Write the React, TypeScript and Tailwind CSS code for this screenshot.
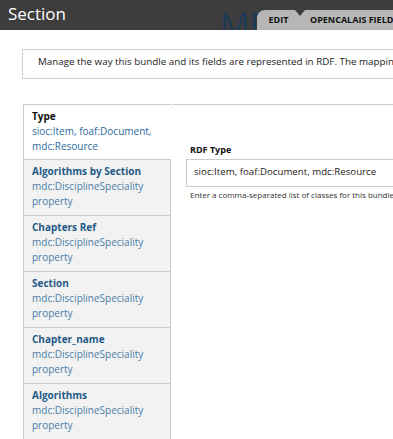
import React from 'react';

const font = { fontFamily: '"Open Sans", "Noto Sans", Arial, sans-serif' };

const tabs = [
  { title: 'Type', sub: ['sioc:Item, foaf:Document,', 'mdc:Resource'], selected: true },
  { title: 'Algorithms by Section', sub: ['mdc:DisciplineSpeciality', 'property'] },
  { title: 'Chapters Ref', sub: ['mdc:DisciplineSpeciality', 'property'] },
  { title: 'Section', sub: ['mdc:DisciplineSpeciality', 'property'] },
  { title: 'Chapter_name', sub: ['mdc:DisciplineSpeciality', 'property'] },
  { title: 'Algorithms', sub: ['mdc:DisciplineSpeciality', 'property'] },
];

export default function App() {
  return (
    <div className="w-[393px] h-[439px] overflow-hidden bg-white" style={font}>
      {/* Title bar, page heading shows through behind the tabs */}
      <div className="relative h-[30px] bg-[#3d3d3d] overflow-hidden flex items-end">
        <span className="absolute left-[220px] top-[8px] text-[33px] leading-[33px] text-[#1d3b57]">MENU</span>
        <span className="relative self-start pl-[8px] pt-[3px] text-[17px] text-white leading-[22px]">Section</span>
        <div className="relative ml-auto flex w-[136px] shrink-0 overflow-hidden">
          <div className="h-[20px] w-[43px] shrink-0 rounded-tl-[8px] bg-[#b6b6b6] flex items-center justify-center text-[9px] font-bold text-[#111]">
            EDIT
          </div>
          <div className="relative h-[20px] shrink-0 bg-[#b6b6b6] flex items-center pl-[10px] pr-[10px] text-[9px] font-bold text-[#111] whitespace-nowrap">
            <span className="absolute left-[-5px] top-0 w-0 h-0 border-l-[5px] border-r-[5px] border-t-[6px] border-l-transparent border-r-transparent border-t-[#3d3d3d]" />
            OPENCALAIS FIELDS
          </div>
        </div>
      </div>

      {/* Description */}
      <div className="ml-[22px] mt-[19px] h-[30px] border border-[#d0d0d0] border-r-0 pl-[15px] pt-[5px] text-[9.8px] text-[#222] whitespace-nowrap overflow-hidden">
        Manage the way this bundle and its fields are represented in RDF. The mapping is used to export data
      </div>

      {/* Vertical tabs */}
      <div className="ml-[23px] mt-[25px] flex">
        <ul className="w-[148px] shrink-0 border-l border-[#cccccc]">
          {tabs.map((t) => (
            <li
              key={t.title}
              className={
                t.selected
                  ? 'h-[55px] bg-white border-t border-[#cccccc] pl-[8px] pt-[4px] leading-[15px]'
                  : 'h-[56px] bg-[#f2f2f2] border-t border-r border-[#cccccc] pl-[8px] pt-[4px] leading-[15px]'
              }
            >
              <div className={t.selected ? 'text-[10px] font-bold text-[#111]' : 'text-[10px] font-bold text-[#1f5a88]'}>{t.title}</div>
              {t.sub.map((s) => (
                <div key={s} className={t.selected ? 'text-[10px] text-[#2e6aa0]' : 'text-[10px] text-[#4a7ea8]'}>{s}</div>
              ))}
            </li>
          ))}
        </ul>
        <div className="flex-1 border-t border-[#cccccc] rounded-tl-[3px] pl-[15px] pt-[38px]">
          <div className="text-[9px] font-bold text-[#111] mb-[2px] pl-[4px]">RDF Type</div>
          <div className="h-[28px] border border-[#cccccc] border-r-0 pl-[7px] flex items-center text-[9.7px] text-[#222] whitespace-nowrap overflow-hidden">
            sioc:Item, foaf:Document, mdc:Resource
          </div>
          <div className="mt-[2px] pl-[4px] text-[8px] text-[#333] whitespace-nowrap overflow-hidden">
            Enter a comma-separated list of classes for this bundle's RDF mapping.
          </div>
        </div>
      </div>
    </div>
  );
}
